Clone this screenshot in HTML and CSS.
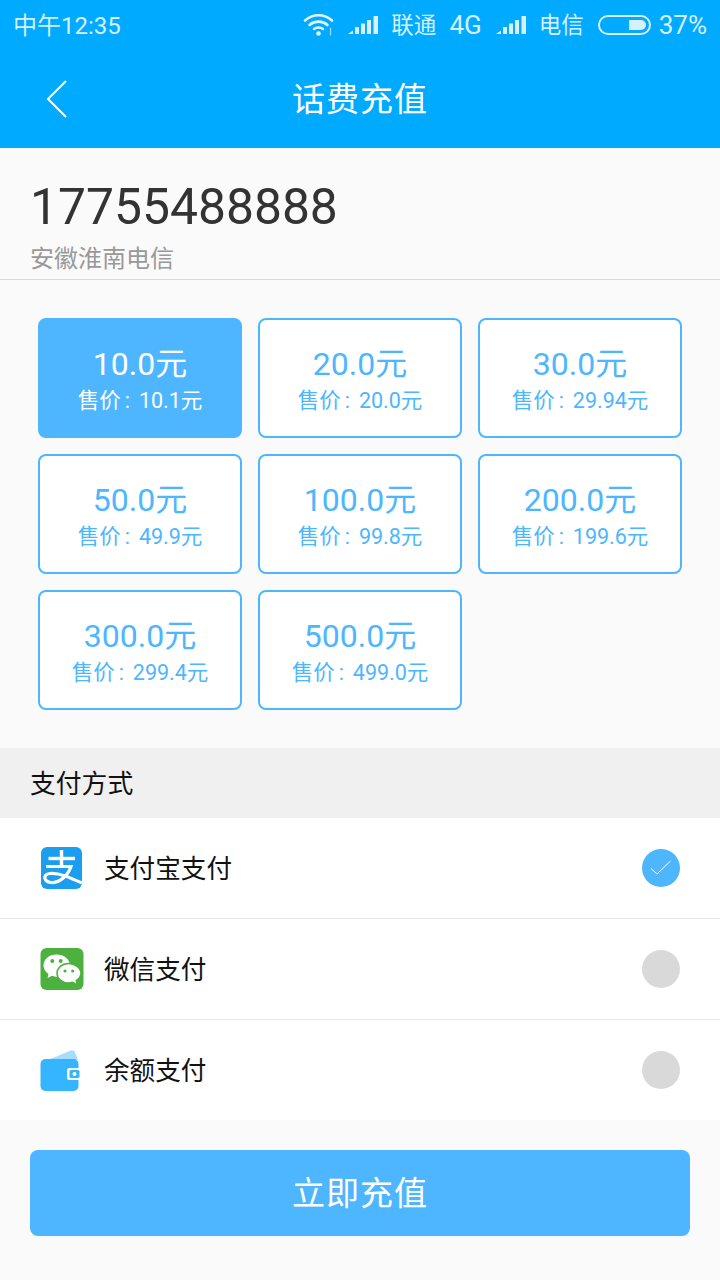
FILE: index.html
```html
<!DOCTYPE html>
<html lang="zh-CN">

<head>
    <meta charset="UTF-8">
    <meta name="viewport" content="width=device-width, initial-scale=1.0">
    <title>话费充值</title>
    <link rel="stylesheet" href="styles.css">
</head>

<body>
    <div class="top">
        <div class="status-bar">
            <span class="status-time">中午12:35</span>
            <div class="status-right">
                <svg class="wifi" width="32" height="24" viewBox="0 0 32 24" fill="none" stroke="#e4f5ff" stroke-linecap="round">
                    <path d="M2 7.500C9.500 0.500 21.500 0.500 29 7.500" stroke-width="2.600"/>
                    <path d="M6.500 12C11.500 7.500 19.500 7.500 24.500 12" stroke-width="2.600"/>
                    <path d="M11 16C13.500 14 17.500 14 20 16" stroke-width="2.400"/>
                    <circle cx="15.500" cy="20.500" r="2.300" fill="#e4f5ff" stroke="none"/>
                    <path d="M27.500 15V22" stroke="#9fdcff" stroke-width="1.200"/>
                </svg>
                <svg class="signal" width="30" height="20" viewBox="0 0 30 20" fill="#d6f0ff">
                    <path d="M0 19L5 15.500V19Z"/>
                    <rect x="7" y="12" width="4" height="7"/>
                    <rect x="13" y="8.500" width="4" height="10.500"/>
                    <rect x="19" y="5" width="4" height="14"/>
                    <rect x="25.500" y="1" width="4.500" height="18"/>
                </svg>
                <span class="carrier">联通</span>
                <span class="net">4G</span>
                <svg class="signal" width="30" height="20" viewBox="0 0 30 20" fill="#d6f0ff">
                    <path d="M0 19L5 15.500V19Z"/>
                    <rect x="7" y="12" width="4" height="7"/>
                    <rect x="13" y="8.500" width="4" height="10.500"/>
                    <rect x="19" y="5" width="4" height="14"/>
                    <rect x="25.500" y="1" width="4.500" height="18"/>
                </svg>
                <span class="carrier">电信</span>
                <div class="battery"><div class="battery-level"></div></div>
                <span class="percent">37%</span>
            </div>
        </div>
        <div class="nav-bar">
            <svg class="back" width="22" height="40" viewBox="0 0 22 40" fill="none" stroke="#fff" stroke-width="2">
                <path d="M20 1L2 19L20 37"/>
            </svg>
            <h1 class="nav-title">话费充值</h1>
        </div>
    </div>

    <div class="phone-box">
        <div class="phone-number">17755488888</div>
        <div class="phone-area">安徽淮南电信</div>
    </div>

    <div class="amounts">
        <div class="amount active">
            <div class="face">10.0元</div>
            <div class="sale">售价<span class="colon">:</span>10.1元</div>
        </div>
        <div class="amount">
            <div class="face">20.0元</div>
            <div class="sale">售价<span class="colon">:</span>20.0元</div>
        </div>
        <div class="amount">
            <div class="face">30.0元</div>
            <div class="sale">售价<span class="colon">:</span>29.94元</div>
        </div>
        <div class="amount">
            <div class="face">50.0元</div>
            <div class="sale">售价<span class="colon">:</span>49.9元</div>
        </div>
        <div class="amount">
            <div class="face">100.0元</div>
            <div class="sale">售价<span class="colon">:</span>99.8元</div>
        </div>
        <div class="amount">
            <div class="face">200.0元</div>
            <div class="sale">售价<span class="colon">:</span>199.6元</div>
        </div>
        <div class="amount">
            <div class="face">300.0元</div>
            <div class="sale">售价<span class="colon">:</span>299.4元</div>
        </div>
        <div class="amount">
            <div class="face">500.0元</div>
            <div class="sale">售价<span class="colon">:</span>499.0元</div>
        </div>
    </div>

    <div class="pay-title">支付方式</div>

    <div class="pay-list">
        <div class="pay-row">
            <svg class="pay-icon" width="44" height="44" viewBox="0 0 44 44">
                <rect x="1" y="1" width="41" height="42" rx="6" fill="#1b9df0"/>
                <g fill="none" stroke="#fff">
                    <path d="M8.500 12.500H35" stroke-width="3.400"/>
                    <path d="M21.500 4V20" stroke-width="3.400"/>
                    <path d="M6 20.500H31C28 29 20 37.500 11 36.500C3.500 35.500 2.500 28.500 10 27.500C19 26.500 31 32 42 37" stroke-width="3.200"/>
                </g>
            </svg>
            <span class="pay-name">支付宝支付</span>
            <span class="radio checked">
                <svg width="38" height="38" viewBox="0 0 38 38" fill="none" stroke="#fff" stroke-width="1">
                    <path d="M9 19.500L15 25L28.500 12"/>
                </svg>
            </span>
        </div>
        <div class="pay-row">
            <svg class="pay-icon" width="44" height="44" viewBox="0 0 44 44">
                <rect x="0.500" y="1" width="43" height="42" rx="6" fill="#4cb13f"/>
                <path d="M16.500 7.500C9 7.500 3.500 12.300 3.500 18.500C3.500 22 5.500 25 8.500 27L7.500 31L12 28.800C14 29.500 15.500 29.800 17.500 29.800C24 29.800 30 24 30 18.500C30 12.300 24 7.500 16.500 7.500Z" fill="#fff"/>
                <path d="M28.500 16.500C22 16.500 17 21 17 26.300C17 31.600 22 36 28.500 36C30 36 31.300 35.700 32.500 35.300L37.500 38L36.300 33.500C39 31.800 41 29.300 41 26.300C41 21 35 16.500 28.500 16.500Z" fill="#fff" stroke="#4cb13f" stroke-width="1.500"/>
                <g fill="#4cb13f">
                    <circle cx="12.300" cy="14" r="2"/>
                    <circle cx="20.700" cy="14" r="2"/>
                    <circle cx="25" cy="24" r="1.600"/>
                    <circle cx="32.700" cy="24" r="1.600"/>
                </g>
            </svg>
            <span class="pay-name">微信支付</span>
            <span class="radio"></span>
        </div>
        <div class="pay-row last">
            <svg class="pay-icon" width="44" height="44" viewBox="0 0 44 44">
                <path d="M3 14L31 2.500C33 2 34.500 3 35 4.500L38 12Z" fill="#a6dcfd"/>
                <rect x="0.500" y="11" width="38" height="32" rx="5" fill="#36b5ff"/>
                <rect x="27" y="20" width="16" height="12" rx="2.500" fill="#fff"/>
                <rect x="29.500" y="22" width="10" height="8" rx="1.500" fill="#36b5ff"/>
                <circle cx="34.500" cy="26" r="2" fill="#fff"/>
            </svg>
            <span class="pay-name">余额支付</span>
            <span class="radio"></span>
        </div>
    </div>

    <div class="footer">
        <button class="submit"><span class="submit-text">立即充值</span></button>
    </div>
</body>

</html>
```

FILE: styles.css
```css
* {
    box-sizing: border-box;
}

html,
body {
    margin: 0;
    padding: 0;
}

body {
    width: 720px;
    height: 1280px;
    overflow: hidden;
    background: #fafafa;
    font-family: Roboto, "Noto Sans CJK SC", sans-serif;
}

.top {
    height: 148px;
    background: #00aaff;
    color: #fff;
}

.status-bar {
    height: 50px;
    padding: 0 13px;
    display: flex;
    align-items: center;
    justify-content: space-between;
    color: #d6f0ff;
    font-size: 24px;
}

.status-time {
    margin-bottom: 4px;
}

.status-right {
    display: flex;
    align-items: center;
}

.wifi {
    margin-right: 13px;
}

.signal {
    margin-right: 13px;
}

.carrier {
    font-size: 22.500px;
    margin-right: 13px;
    margin-bottom: 4px;
}

.net {
    font-size: 26px;
    margin-right: 14px;
}

.battery {
    width: 53px;
    height: 20px;
    margin: 0 8px 0 1px;
    padding: 3px;
    border: 2px solid #d6f0ff;
    border-radius: 10px;
    display: flex;
    justify-content: flex-end;
}

.battery-level {
    width: 17px;
    background: #d6f0ff;
    border-radius: 1px 6px 6px 1px;
}

.percent {
    font-size: 26px;
}

.nav-bar {
    position: relative;
    height: 98px;
    display: flex;
    align-items: center;
    justify-content: center;
}

.back {
    position: absolute;
    left: 46px;
    top: 30px;
}

.nav-title {
    margin: 0 0 4px;
    font-size: 33px;
    font-weight: 400;
    letter-spacing: 1px;
}

.phone-box {
    height: 132px;
    padding: 27px 30px 0;
    border-bottom: 1px solid #d9d9d9;
}

.phone-number {
    font-size: 49.800px;
    line-height: 64px;
    color: #333;
}

.phone-area {
    font-size: 24px;
    line-height: 34px;
    margin-top: 3px;
    color: #999;
}

.amounts {
    display: grid;
    grid-template-columns: repeat(3, 204px);
    grid-auto-rows: 120px;
    gap: 16px;
    padding: 38px;
    height: 468px;
}

.amount {
    background: #fff;
    border: 2px solid #4db6ff;
    border-radius: 8px;
    color: #4db6ff;
    text-align: center;
    padding-top: 24px;
}

.amount.active {
    background: #4db6ff;
    color: #fff;
}

.face {
    font-size: 32px;
    line-height: 40px;
}

.sale {
    font-size: 21.500px;
    line-height: 30px;
    margin-top: 2px;
}

.colon {
    padding: 0 9px 0 4px;
}

.pay-title {
    height: 70px;
    padding-left: 30px;
    line-height: 72px;
    font-size: 25.800px;
    color: #111;
    background: #f0f0f0;
}

.pay-list {
    background: #fff;
}

.pay-row {
    height: 101px;
    padding: 0 40px;
    display: flex;
    align-items: center;
    border-bottom: 1px solid #e8e8e8;
}

.pay-row.last {
    height: 100px;
    border-bottom: none;
}

.pay-name {
    margin: 0 0 4px 20px;
    flex: 1;
    font-size: 25.600px;
    color: #111;
}

.radio {
    width: 38px;
    height: 38px;
    border-radius: 50%;
    background: #d9d9d9;
    display: flex;
}

.radio.checked {
    background: #4db6ff;
}

.footer {
    padding: 30px;
}

.submit {
    display: block;
    width: 660px;
    height: 86px;
    border: none;
    border-radius: 8px;
    background: #4db6ff;
    color: #fff;
    font-family: inherit;
    font-size: 33px;
    letter-spacing: 1px;
}

.submit-text {
    display: block;
    margin-bottom: 4px;
}
```
